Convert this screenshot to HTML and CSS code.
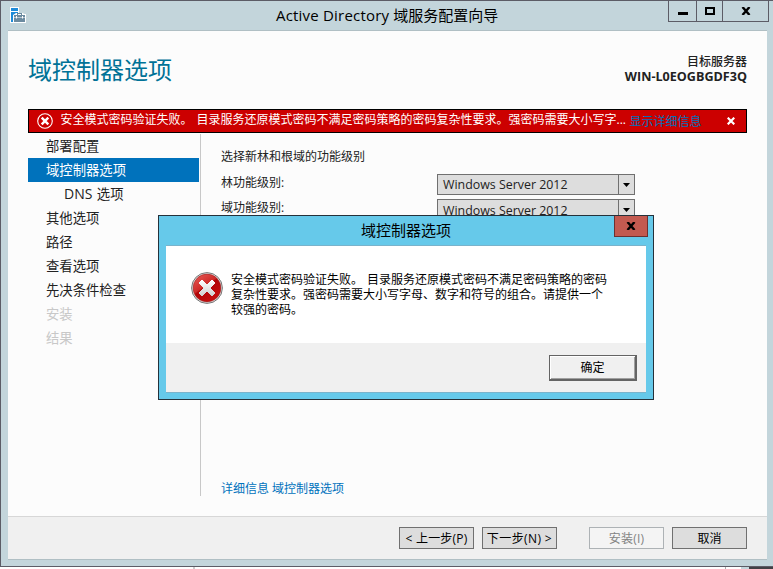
FILE: index.html
```html
<!DOCTYPE html>
<html lang="zh-CN">
<head>
<meta charset="utf-8">
<title>Active Directory 域服务配置向导</title>
<link rel="stylesheet" href="styles.css">
</head>
<body>
<div class="window">
  <header class="titlebar">
    <svg class="app-icon" width="16" height="16" viewBox="0 0 16 16"><path fill="#fff" d="M0 0h9v6h4l1 1h2v9H0z"/><path fill="#1e8bd8" d="M1 1h7v3H1zM1 5h7v1H6L3 8v7H1z"/><path fill="#6c8ba0" d="M4 8h11v7H4zM7 6h5v2h-1V7H8v1H7z"/><path fill="#fff" d="M4 10h11v.5H4zM6 9h1v2.500H6zM12 9h1v2.500h-1z"/></svg>
    <h1 class="window-title"><span class="latin">Active Directory</span> 域服务配置向导</h1>
    <div class="caption">
      <span class="cap min"><svg width="10" height="3"><path d="M0 0h10v3H0z"/></svg></span>
      <span class="cap max"><svg width="10" height="8"><path fill="none" stroke="#000" stroke-width="2" d="M1 1h8v6H1z"/></svg></span>
      <span class="cap close"><svg width="10" height="8"><path fill="none" stroke="#000" stroke-width="2.400" d="M1.500 0l7 8M8.500 0l-7 8"/></svg></span>
    </div>
  </header>
  <main class="client">
    <div class="heading">
      <h2>域控制器选项</h2>
      <div class="target"><div>目标服务器</div><div class="host">WIN-L0EOGBGDF3Q</div></div>
    </div>
    <div class="alert">
      <svg class="alert-icon" width="16" height="16" viewBox="0 0 16 16"><circle cx="8" cy="8" r="7.300" fill="none" stroke="#fff" stroke-width="1.100"/><path stroke="#fff" stroke-width="2.400" d="M4.700 4.700l6.600 6.600M11.300 4.700l-6.600 6.600"/></svg>
      <span class="alert-text">安全模式密码验证失败。<i class="gap"></i>目录服务还原模式密码不满足密码策略的密码复杂性要求。强密码需要大小写字...</span>
      <a class="alert-link">显示详细信息</a>
      <svg class="alert-close" width="8" height="8" viewBox="0 0 8 8"><path stroke="#fff" stroke-width="2.200" d="M.7.7l6.600 6.600M7.300.7L.7 7.300"/></svg>
    </div>
    <div class="content">
      <nav class="steps">
        <div class="step">部署配置</div>
        <div class="step active">域控制器选项</div>
        <div class="step sub"><span class="dns">DNS</span> 选项</div>
        <div class="step">其他选项</div>
        <div class="step">路径</div>
        <div class="step">查看选项</div>
        <div class="step">先决条件检查</div>
        <div class="step off">安装</div>
        <div class="step off">结果</div>
      </nav>
      <section class="panel">
        <p class="intro">选择新林和根域的功能级别</p>
        <div class="field"><label>林功能级别:</label><div class="select"><span>Windows Server 2012</span><b><svg width="7" height="4"><path d="M0 0h7L3.500 4z"/></svg></b></div></div>
        <div class="field second"><label>域功能级别:</label><div class="select"><span>Windows Server 2012</span><b><svg width="7" height="4"><path d="M0 0h7L3.500 4z"/></svg></b></div></div>
        <a class="more">详细信息 域控制器选项</a>
      </section>
    </div>
    <footer class="actions">
      <button class="btn"><span>&lt; 上一步(P)</span></button>
      <button class="btn next"><span>下一步(N) &gt;</span></button>
      <button class="btn disabled"><span>安装(I)</span></button>
      <button class="btn cancel"><span>取消</span></button>
    </footer>
  </main>
</div>
<div class="behind"><i class="b1"></i><i class="b2"></i><i class="b3"></i><i class="b4"></i></div>
<div class="dialog">
  <div class="dialog-title">域控制器选项<span class="dialog-close"><svg width="10" height="8"><path fill="none" stroke="#000" stroke-width="2.400" d="M1.500 0l7 8M8.500 0l-7 8"/></svg></span></div>
  <div class="dialog-client">
    <div class="message">
      <svg class="error-icon" width="32" height="32" viewBox="0 0 32 32"><defs><linearGradient id="red" x1="0" y1="0" x2=".7" y2="1"><stop offset="0" stop-color="#e8605c"/><stop offset=".48" stop-color="#cf2a28"/><stop offset=".52" stop-color="#b00507"/><stop offset="1" stop-color="#c81010"/></linearGradient><linearGradient id="cross" x1="0" y1="0" x2="0" y2="1"><stop offset="0" stop-color="#fff"/><stop offset="1" stop-color="#cfcfcf"/></linearGradient></defs><circle cx="16" cy="16" r="15.400" fill="#e3e3e3" stroke="#777"/><circle cx="16" cy="16" r="13.900" fill="url(#red)" stroke="#9b2020" stroke-width=".6"/><path fill="url(#cross)" stroke="url(#cross)" stroke-linejoin="round" d="M11 8l5 5 5-5 3 3-5 5 5 5-3 3-5-5-5 5-3-3 5-5-5-5z"/></svg>
      <p>安全模式密码验证失败。<i class="gap"></i>目录服务还原模式密码不满足密码策略的密码<br>复杂性要求。强密码需要大小写字母、数字和符号的组合。请提供一个<br>较强的密码。</p>
    </div>
    <div class="dialog-actions"><button class="ok">确定</button></div>
  </div>
</div>
</body>
</html>
```
FILE: styles.css
```css
* { box-sizing: border-box; margin: 0; padding: 0; }
body {
  position: relative;
  width: 773px;
  height: 569px;
  overflow: hidden;
  font: 12px/16px "Open Sans", "Noto Sans CJK SC", sans-serif;
  color: #222;
  background: #fff;
  white-space: nowrap;
}
svg { display: block; flex: none; }
.window {
  width: 773px;
  height: 567px;
  border: solid #5c5c66;
  border-width: 1px 0 1px 1px;
  background: #c3d5db;
  padding: 0 6px 6px 7px;
}
.titlebar { display: flex; width: 761px; height: 29px; }
.app-icon { margin: 6px 0 0 2px; }
.window-title {
  width: 224px;
  margin-left: 250px;
  font-size: 15px;
  font-weight: 400;
  line-height: 29px;
  color: #000;
}
.latin { letter-spacing: .2px; }
.caption { display: flex; flex: none; height: 21px; margin-left: 168px; border: solid #5c5c66; border-width: 0 0 1px 1px; }
.cap { display: flex; align-items: center; justify-content: center; border-right: 1px solid #5c5c66; }
.min { width: 28px; padding-top: 5px; }
.max { width: 26px; }
.close { width: 46px; }
.client {
  display: flex;
  flex-direction: column;
  width: 759px;
  height: 530px;
  border: solid #b0bfc4;
  border-width: 1px 0;
  background: #fcfcfc;
}
.heading { display: flex; justify-content: space-between; height: 78px; padding: 22px 20px 0; }
h2 { font-size: 24px; font-weight: 400; line-height: 34px; color: #007297; }
.target { padding-top: 1px; line-height: 15px; text-align: right; font-weight: 500; }
.host { font-size: 12.6px; font-weight: 700; }
.alert {
  display: flex;
  width: 719px;
  height: 24px;
  margin-left: 20px;
  border: 1px solid #000;
  background: #c00;
  color: #fff;
}
.alert-icon { margin: 3px 0 0 8px; }
.alert-text { width: 569px; margin-left: 7.5px; line-height: 20px; }
.gap { display: inline-block; width: 4px; }
.alert-link { color: #0072bc; line-height: 23px; }
.alert-close { margin: 7px 0 0 25.5px; }
.content { display: flex; height: 383px; padding: 1px 20px 0; }
.steps { width: 173px; height: 362px; border-right: 1px solid #c8c8c8; font-size: 13.333px; }
.step { width: 171px; height: 24px; padding-left: 18px; line-height: 24px; }
.active { background: #0072bc; color: #fff; }
.sub { padding-left: 36px; }
.dns { margin-right: 1px; font-size: 14px; line-height: 20px; }
.off { color: #c8c8c8; }
.panel { display: flex; flex-direction: column; width: 460px; padding: 15px 0 0 20px; }
.intro { height: 25px; }
.field { display: flex; height: 25px; }
.field label { width: 216px; padding-top: 1px; }
.select { display: flex; width: 198px; height: 21px; border: 1px solid #707070; background: #ddd; font-size: 12.4px; }
.select span { flex: 1; padding-left: 5px; line-height: 19px; }
.select b { display: flex; width: 16px; border-left: 1px solid #707070; align-items: center; justify-content: center; }
.second label { padding-top: 1px; }
.second .select span { line-height: 21px; }
.more { margin-top: auto; margin-bottom: 19px; color: #0072bc; }
.actions { display: flex; height: 43px; padding: 10px 0 0 391px; border-top: 1px solid #d7d7d7; background: #f0f0f0; }
.btn {
  display: flex;
  justify-content: center;
  width: 75px;
  height: 22px;
  border: 1px solid #707070;
  background: #ddd;
  font: inherit;
  line-height: 22px;
  letter-spacing: .2px;
  color: #000;
}
.next { margin-left: 8px; letter-spacing: .4px; }
.disabled { margin-left: 32px; border-color: #adb2b5; background: #f4f4f4; color: #838383; }
.cancel { margin-left: 8px; letter-spacing: 0; }
.behind { display: flex; height: 2px; background: #fff; }
.b1 { width: 195px; border-right: 2px solid #ccc; }
.b2 { width: 531px; border-right: 1px solid #aaa; }
.b3 { width: 15px; }
.b4 { width: 32px; border-left: 8px solid #c3d5db; background: #404045; }
.dialog {
  position: absolute;
  left: 158px;
  top: 215px;
  width: 496px;
  height: 185px;
  border: 1px solid #25313a;
  background: #66c9ea;
  color: #000;
  padding: 0 7px;
}
.dialog-title { position: relative; height: 29px; font-size: 15px; line-height: 28px; text-align: center; }
.dialog-close {
  position: absolute;
  top: 0;
  right: -2px;
  display: flex;
  align-items: center;
  justify-content: center;
  width: 34px;
  height: 21px;
  border: 1px solid #6d3030;
  border-top: 0;
  background: #c35a50;
}
.dialog-client { height: 148px; border: solid #7ab3cb; border-width: 1px 0; background: #fff; }
.message { display: flex; height: 97px; padding: 26px 0 0 25px; }
.message p { margin-left: 8px; line-height: 15px; }
.dialog-actions { display: flex; justify-content: flex-end; height: 49px; padding: 12px 9px 0 0; background: #f0f0f0; }
.ok {
  width: 88px;
  height: 26px;
  border: 1px solid #646464;
  border-width: 1px 2px 2px 1px;
  background: #f0f0f0;
  box-shadow: inset 1px 1px #fff, inset -1px -1px #a0a0a0;
  font: inherit;
  color: #000;
}
```
